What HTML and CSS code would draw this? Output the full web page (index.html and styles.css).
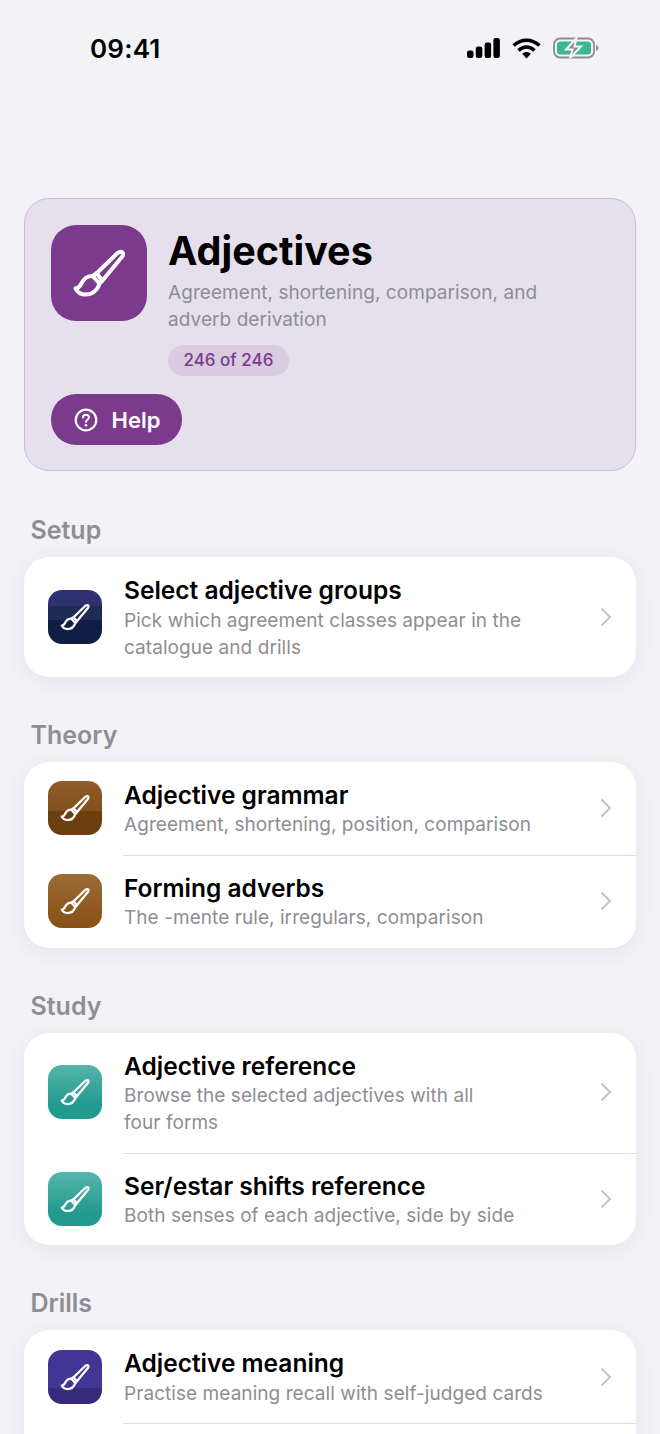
FILE: index.html
```html
<!DOCTYPE html>
<html lang="en">
<head>
<meta charset="utf-8">
<title>Adjectives</title>
<link rel="stylesheet" href="styles.css">
</head>
<body>
<svg class="defs" width="0" height="0" aria-hidden="true">
  <symbol id="brush" viewBox="0 0 96 96">
    <g fill="none" stroke="#fff" stroke-width="4" stroke-linejoin="round" stroke-linecap="round">
      <path d="M45.700 48.300 L66.500 28 Q70.500 25.500 71.800 28 Q72.500 29.800 71.300 31.500 L51.300 55.700 Z"/>
      <path d="M45.700 48.300 L41.500 51 L48.500 58.500 L51.300 55.700"/>
      <path d="M41.500 51 C36 51 33 53.500 31 57.500 C29 61.500 27.500 63.300 24.500 63.300 C26.500 67.500 30 69.500 34.500 69.500 C41 69.500 46.500 65.500 48.500 58.500"/>
    </g>
  </symbol>
</svg>
<div class="status">
  <span class="time">09:41</span>
  <div class="status-icons">
    <svg width="34" height="20" viewBox="0 0 34 20"><g fill="#000"><rect x="1" y="12.500" width="6.500" height="7.500" rx="2.200"/><rect x="9.800" y="8.500" width="6.500" height="11.500" rx="2.200"/><rect x="18.600" y="4.500" width="6.500" height="15.500" rx="2.200"/><rect x="27.400" y="0" width="6.500" height="20" rx="2.200"/></g></svg>
    <svg width="29" height="21" viewBox="0 0 29 21"><g fill="none" stroke="#000" stroke-width="3.600"><path d="M1.500 7.500C9.500.5 19.500.5 27.500 7.500"/><path d="M6.500 12.500C11.500 8 17.500 8 22.500 12.500"/></g><path d="M10.200 15.800C12.800 13.500 16.200 13.500 18.800 15.800L14.500 20.500Z" fill="#000"/></svg>
    <svg width="46" height="22" viewBox="0 0 46 22"><rect x="1" y="1.500" width="40" height="19" rx="6" fill="none" stroke="#8e8e93" stroke-width="1.800"/><rect x="4" y="4.500" width="34" height="13" rx="3.500" fill="#3cb88f"/><path d="M43 8v6c1.500-.5 2.500-1.500 2.500-3S44.500 8.500 43 8Z" fill="#8e8e93"/><path d="M23.500 1 13 12.500h6.500L17 21 28 9.500h-6.500Z" fill="#8e8e93" stroke="#f2f2f7" stroke-width="2"/></svg>
  </div>
</div>

<main class="page">
  <section class="hero">
    <div class="hero-top">
      <div class="hero-icon"><svg width="96" height="96"><use href="#brush"/></svg></div>
      <div class="hero-text">
        <h1>Adjectives</h1>
        <p>Agreement, shortening, comparison, and adverb derivation</p>
        <span class="pill">246 of 246</span>
      </div>
    </div>
    <div class="help">
      <svg width="24" height="24" viewBox="0 0 24 24"><circle cx="12" cy="12" r="10.300" fill="none" stroke="#fff" stroke-width="2.200"/><path d="M9 9.500C9 7.700 10.300 6.700 12 6.700S15 7.800 15 9.300C15 11.500 12 11.500 12 14" fill="none" stroke="#fff" stroke-width="2" stroke-linecap="round"/><circle cx="12" cy="17.200" r="1.300" fill="#fff"/></svg>
      <span>Help</span>
    </div>
  </section>

  <h2 class="label">Setup</h2>
  <div class="card">
    <div class="row">
      <div class="icon navy"><svg width="54" height="54"><use href="#brush"/></svg></div>
      <div class="row-text"><h3>Select adjective groups</h3><p>Pick which agreement classes appear in the catalogue and drills</p></div>
      <svg class="chev" width="12" height="20" viewBox="0 0 12 20"><path d="M1.500 1.500 10 10l-8.500 8.500" fill="none" stroke="#c4c4c7" stroke-width="2"/></svg>
    </div>
  </div>

  <h2 class="label">Theory</h2>
  <div class="card">
    <div class="row">
      <div class="icon brown"><svg width="54" height="54"><use href="#brush"/></svg></div>
      <div class="row-text"><h3>Adjective grammar</h3><p>Agreement, shortening, position, comparison</p></div>
      <svg class="chev" width="12" height="20" viewBox="0 0 12 20"><path d="M1.500 1.500 10 10l-8.500 8.500" fill="none" stroke="#c4c4c7" stroke-width="2"/></svg>
    </div>
    <div class="row">
      <div class="icon amber"><svg width="54" height="54"><use href="#brush"/></svg></div>
      <div class="row-text"><h3>Forming adverbs</h3><p>The -mente rule, irregulars, comparison</p></div>
      <svg class="chev" width="12" height="20" viewBox="0 0 12 20"><path d="M1.500 1.500 10 10l-8.500 8.500" fill="none" stroke="#c4c4c7" stroke-width="2"/></svg>
    </div>
  </div>

  <h2 class="label">Study</h2>
  <div class="card">
    <div class="row">
      <div class="icon teal"><svg width="54" height="54"><use href="#brush"/></svg></div>
      <div class="row-text narrow"><h3>Adjective reference</h3><p>Browse the selected adjectives with all four forms</p></div>
      <svg class="chev" width="12" height="20" viewBox="0 0 12 20"><path d="M1.500 1.500 10 10l-8.500 8.500" fill="none" stroke="#c4c4c7" stroke-width="2"/></svg>
    </div>
    <div class="row">
      <div class="icon teal"><svg width="54" height="54"><use href="#brush"/></svg></div>
      <div class="row-text"><h3>Ser/estar shifts reference</h3><p>Both senses of each adjective, side by side</p></div>
      <svg class="chev" width="12" height="20" viewBox="0 0 12 20"><path d="M1.500 1.500 10 10l-8.500 8.500" fill="none" stroke="#c4c4c7" stroke-width="2"/></svg>
    </div>
  </div>

  <h2 class="label">Drills</h2>
  <div class="card">
    <div class="row">
      <div class="icon violet"><svg width="54" height="54"><use href="#brush"/></svg></div>
      <div class="row-text"><h3>Adjective meaning</h3><p>Practise meaning recall with self-judged cards</p></div>
      <svg class="chev" width="12" height="20" viewBox="0 0 12 20"><path d="M1.500 1.500 10 10l-8.500 8.500" fill="none" stroke="#c4c4c7" stroke-width="2"/></svg>
    </div>
    <div class="row"></div>
  </div>
</main>
</body>
</html>
```
FILE: styles.css
```css
* { box-sizing: border-box; margin: 0; padding: 0; }
html, body { height: 1434px; overflow: hidden; }
body {
  background: #f2f2f7;
  font-family: Inter, "Liberation Sans", sans-serif;
  color: #000;
}
.defs { position: absolute; }

.status {
  height: 98px;
  padding: 32px 61px 0 90px;
  display: flex;
  justify-content: space-between;
  align-items: flex-start;
}
.time { font-size: 26px; font-weight: 600; line-height: 34px; letter-spacing: .2px; }
.status-icons { display: flex; align-items: center; gap: 12px; height: 32px; }

.page { padding: 100px 24px 0; display: flex; flex-direction: column; }

.hero {
  height: 273px;
  flex: none;
  margin-bottom: 1px;
  padding: 26px;
  background: #e6dfec;
  border: 1.5px solid #cdbbd8;
  border-radius: 25px;
}
.hero-top { display: flex; gap: 21px; }
.hero-icon {
  width: 96px;
  height: 96px;
  flex: none;
  border-radius: 25px;
  background: #7b3a8c;
}
.hero-icon svg { display: block; }
.hero-text h1 { font-size: 39.500px; font-weight: 700; line-height: 52px; }
.hero-text p {
  max-width: 400px;
  margin-top: 2px;
  font-size: 19px;
  line-height: 27px;
  color: #8e8e93;
  letter-spacing: .06px;
}
.pill {
  display: inline-block;
  margin-top: 12px;
  padding: 0 15.500px;
  height: 31px;
  line-height: 31px;
  border-radius: 16px;
  background: #d9cbe0;
  color: #7b3a8c;
  font-size: 17px;
  font-weight: 500;
}
.help {
  width: 131px;
  height: 51px;
  margin-top: 18px;
  padding-left: 23px;
  display: flex;
  align-items: center;
  gap: 13.500px;
  border-radius: 25px;
  background: #7b3a8c;
  color: #fff;
  font-size: 22px;
  font-weight: 600;
}

.label {
  margin: 42px 0 11px 6.500px;
  font-size: 25px;
  line-height: 32px;
  font-weight: 600;
  color: #8e8e93;
}

.card {
  flex: none;
  background: #fff;
  border-radius: 25px;
  box-shadow: 0 4px 20px rgba(60, 60, 90, .08);
}
.row {
  position: relative;
  min-height: 92.900px;
  padding: 18px 24px 16.400px;
  display: flex;
  align-items: center;
  gap: 22px;
}
.row + .row::before {
  content: "";
  position: absolute;
  top: 0;
  left: 99px;
  right: 0;
  height: 1px;
  background: #dedee2;
}
.icon { width: 54px; height: 54px; flex: none; border-radius: 14px; margin-bottom: 2px; }
.icon svg { display: block; }
.chev { flex: none; margin-bottom: 2px; }
.navy { background: linear-gradient(#2f3070 0 30%, #1f2b52 30% 55%, #101d45 55%); }
.brown { background: linear-gradient(#8f5c2a, #84511d 55%, #6b3f0e 56%); }
.amber { background: linear-gradient(#9c6c38, #8f5a20 60%, #875214); }
.teal { background: linear-gradient(#55b5aa, #239a8f 75%); }
.violet { background: linear-gradient(#423594 0 70%, #352a7c 70%); }

.row-text { flex: 1; min-width: 0; }
.row-text.narrow { padding-right: 85px; }
.row-text h3 { font-size: 24.500px; font-weight: 600; line-height: 30px; }
.row-text p {
  margin-top: 1.500px;
  font-size: 19px;
  line-height: 27px;
  color: #8e8e93;
  letter-spacing: .06px;
}
```
